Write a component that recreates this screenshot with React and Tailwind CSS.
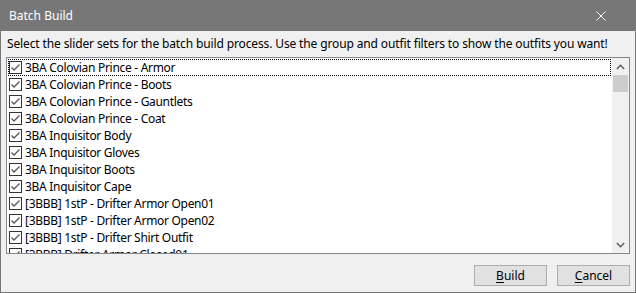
import React from "react";

const items = [
  "3BA Colovian Prince - Armor",
  "3BA Colovian Prince - Boots",
  "3BA Colovian Prince - Gauntlets",
  "3BA Colovian Prince - Coat",
  "3BA Inquisitor Body",
  "3BA Inquisitor Gloves",
  "3BA Inquisitor Boots",
  "3BA Inquisitor Cape",
  "[3BBB] 1stP - Drifter Armor Open01",
  "[3BBB] 1stP - Drifter Armor Open02",
  "[3BBB] 1stP - Drifter Shirt Outfit",
  "[3BBB] Drifter Armor Closed01",
];

function CheckBox() {
  return (
    <svg width="13" height="13" viewBox="0 0 13 13" className="shrink-0">
      <rect x="0.5" y="0.5" width="12" height="12" fill="#fff" stroke="#333" />
      <path d="M2.5 6.5 L5 9 L10.5 3.5" fill="none" stroke="#555" strokeWidth="1.3" />
    </svg>
  );
}

export default function App() {
  return (
    <div
      className="w-[636px] h-[293px] border border-[#777] bg-[#f0f0f0] flex flex-col overflow-hidden text-[12px] text-black"
      style={{ fontFamily: '"Noto Sans", sans-serif' }}
    >
      {/* Title bar */}
      <div className="h-[30px] bg-[#777] flex items-center justify-between pl-[8px] pr-[29px] shrink-0">
        <span className="text-white text-[12px]">Batch Build</span>
        <svg width="10" height="10" viewBox="0 0 10 10">
          <path d="M0.5 0.5 L9.5 9.5 M9.5 0.5 L0.5 9.5" stroke="#fff" strokeWidth="1" />
        </svg>
      </div>

      <div className="flex-1 flex flex-col px-[5px] pt-[3px]">
        <p className="pl-[1px] h-[20px] leading-[20px] whitespace-nowrap tracking-[-0.13px]">
          Select the slider sets for the batch build process. Use the group and outfit filters to show the outfits you want!
        </p>

        {/* List */}
        <div className="mt-[3px] h-[197px] border border-[#828790] bg-white flex">
          <div className="flex-1 overflow-hidden pt-[1px]">
            {items.map((t, i) => (
              <div
                key={i}
                className={`h-[17px] flex items-center gap-[3px] ml-[1px] mr-[1px] ${
                  i === 0 ? "border border-dotted border-black" : "border border-transparent"
                }`}
              >
                <CheckBox />
                <span className="whitespace-nowrap leading-none tracking-[-0.3px]">{t}</span>
              </div>
            ))}
          </div>
          <div className="w-[17px] bg-[#f0f0f0] flex flex-col items-center">
            <div className="h-[17px] w-full flex items-center justify-center">
              <svg width="9" height="6" viewBox="0 0 9 6">
                <path d="M0.8 5 L4.5 1.3 L8.2 5" fill="none" stroke="#606060" strokeWidth="1.6" />
              </svg>
            </div>
            <div className="w-[15px] h-[17px] bg-[#cdcdcd]" />
            <div className="flex-1" />
            <div className="h-[17px] w-full flex items-center justify-center">
              <svg width="9" height="6" viewBox="0 0 9 6">
                <path d="M0.8 1 L4.5 4.7 L8.2 1" fill="none" stroke="#606060" strokeWidth="1.6" />
              </svg>
            </div>
          </div>
        </div>

        {/* Buttons */}
        <div className="flex justify-end gap-[10px] mt-[11px]">
          <button className="w-[73px] h-[21px] bg-[#e1e1e1] border border-[#adadad] text-[12px]">
            <span className="underline underline-offset-2">B</span>uild
          </button>
          <button className="w-[73px] h-[21px] bg-[#e1e1e1] border border-[#adadad] text-[12px]">
            <span className="underline underline-offset-2">C</span>ancel
          </button>
        </div>
      </div>
    </div>
  );
}
